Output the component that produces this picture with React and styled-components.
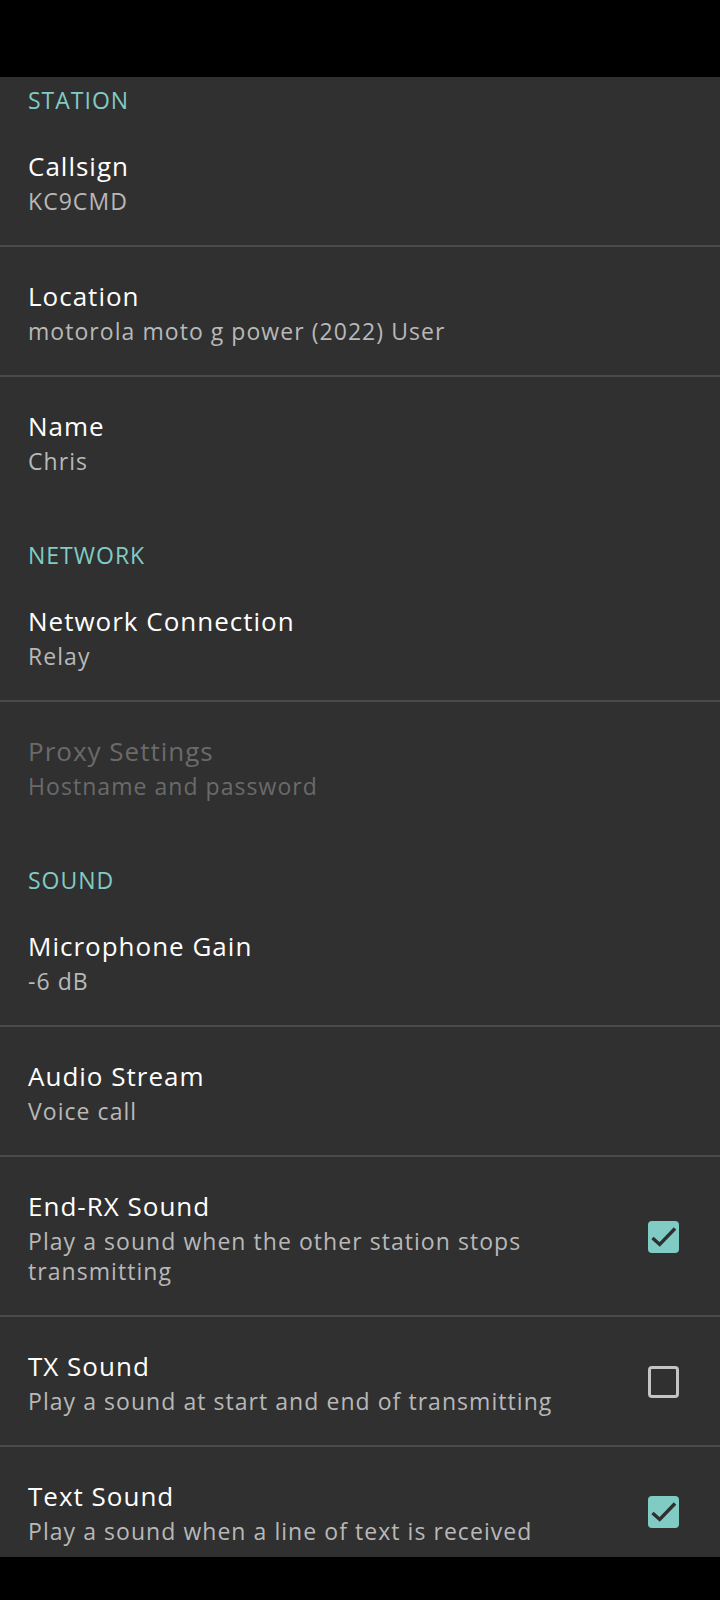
import React from "react";
import styled, { createGlobalStyle } from "styled-components";

const GlobalStyle = createGlobalStyle`
  html, body { margin: 0; padding: 0; background: #000; }
  body { font-family: "Open Sans", "Noto Sans", sans-serif; -webkit-font-smoothing: antialiased; }
  * { box-sizing: border-box; }
`;

const Screen = styled.div`
  width: 720px;
  height: 1600px;
  display: flex;
  flex-direction: column;
  background: #000;
  overflow: hidden;
`;

const StatusBar = styled.div`
  height: 77px;
  flex: none;
  background: #000;
`;

const NavBar = styled.div`
  height: 43px;
  flex: none;
  background: #000;
`;

const List = styled.div`
  flex: 1;
  min-height: 0;
  background: #303030;
  overflow: hidden;
  display: flex;
  flex-direction: column;
`;

const CategoryTitle = styled.div`
  padding: ${(p) => (p.$first ? "8px" : "35px")} 28px 2px;
  line-height: 30px;
  font-size: 23px;
  color: #80cbc4;
  text-transform: uppercase;
  letter-spacing: 1px;
`;

const Row = styled.div`
  flex: none;
  display: flex;
  align-items: center;
  gap: 20px;
  padding: 31px 41px 29px 28px;
  border-bottom: ${(p) => (p.$divider ? "2px solid #4a4a4a" : "none")};
  box-sizing: content-box;
`;

const TextBlock = styled.div`
  flex: 1;
  min-width: 0;
  padding-right: ${(p) => (p.$withWidget ? "20px" : "0")};
`;

const Title = styled.div`
  font-size: 26px;
  line-height: 36px;
  letter-spacing: 1px;
  color: ${(p) => (p.$disabled ? "#6a6a6a" : "#ffffff")};
`;

const Summary = styled.div`
  margin-top: 2px;
  font-size: 23px;
  line-height: 30px;
  letter-spacing: 1.05px;
  color: ${(p) => (p.$disabled ? "#6a6a6a" : "#b8b8b8")};
`;

const Box = styled.div`
  flex: none;
  width: 31px;
  height: 32px;
  border-radius: 4px;
  background: ${(p) => (p.$checked ? "#80cbc4" : "transparent")};
  border: ${(p) => (p.$checked ? "none" : "3px solid #c4c4c4")};
  display: flex;
  align-items: center;
  justify-content: center;
`;

function Checkbox({ checked }) {
  return (
    <Box $checked={checked}>
      {checked && (
        <svg width="31" height="32" viewBox="0 0 31 32">
          <path d="M4.5 17 L11.7 23.5 L27 7.5" fill="none" stroke="#2f2f2f" strokeWidth="3.4" />
        </svg>
      )}
    </Box>
  );
}

function Pref({ title, summary, divider, disabled, checkbox, checked }) {
  return (
    <Row $divider={divider}>
      <TextBlock $withWidget={checkbox}>
        <Title $disabled={disabled}>{title}</Title>
        <Summary $disabled={disabled}>{summary}</Summary>
      </TextBlock>
      {checkbox && <Checkbox checked={checked} />}
    </Row>
  );
}

export default function App() {
  return (
    <Screen>
      <GlobalStyle />
      <StatusBar />
      <List>
        <CategoryTitle $first>Station</CategoryTitle>
        <Pref title="Callsign" summary="KC9CMD" divider />
        <Pref title="Location" summary="motorola moto g power (2022) User" divider />
        <Pref title="Name" summary="Chris" />
        <CategoryTitle>Network</CategoryTitle>
        <Pref title="Network Connection" summary="Relay" divider />
        <Pref title="Proxy Settings" summary="Hostname and password" disabled />
        <CategoryTitle>Sound</CategoryTitle>
        <Pref title="Microphone Gain" summary="-6 dB" divider />
        <Pref title="Audio Stream" summary="Voice call" divider />
        <Pref
          title="End-RX Sound"
          summary="Play a sound when the other station stops transmitting"
          divider
          checkbox
          checked
        />
        <Pref
          title="TX Sound"
          summary="Play a sound at start and end of transmitting"
          divider
          checkbox
          checked={false}
        />
        <Pref
          title="Text Sound"
          summary="Play a sound when a line of text is received"
          checkbox
          checked
        />
      </List>
      <NavBar />
    </Screen>
  );
}
